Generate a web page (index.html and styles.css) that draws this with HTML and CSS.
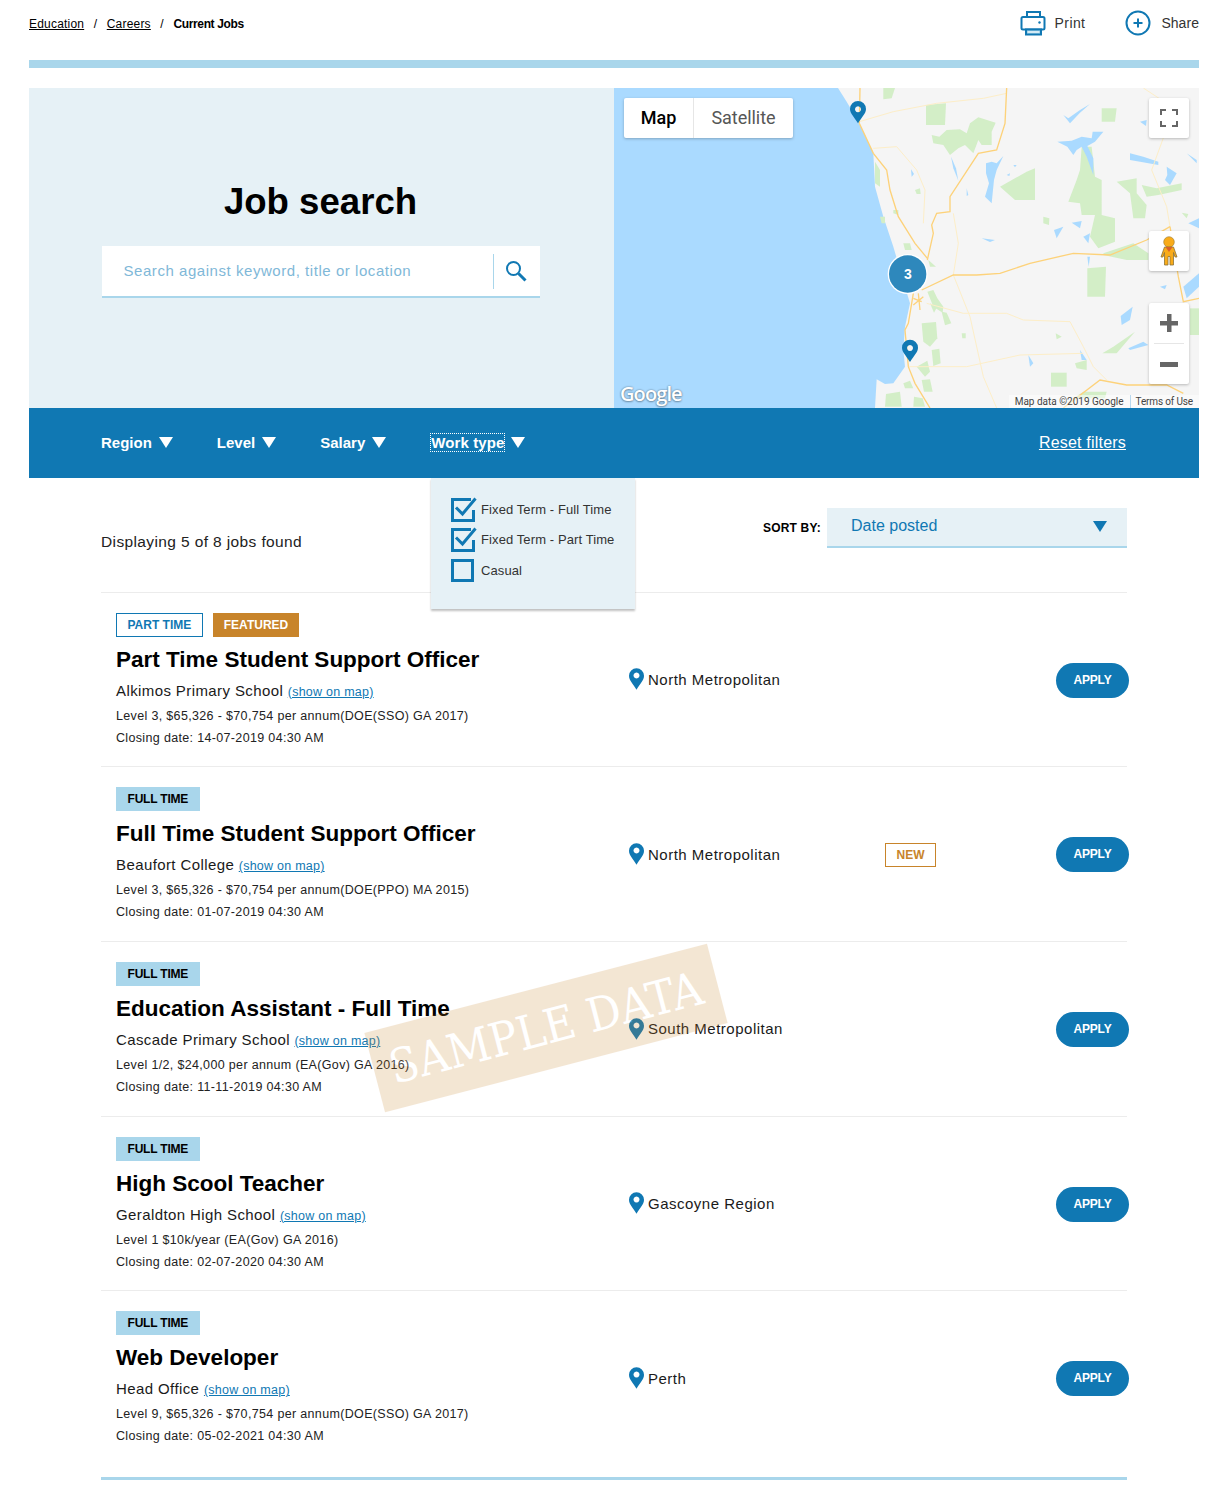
FILE: index.html
```html
<!DOCTYPE html>
<html lang="en">
<head>
<meta charset="utf-8">
<title>Current Jobs</title>
<link rel="stylesheet" href="styles.css">
</head>
<body>
<div class="page">
  <header class="topbar">
    <nav class="crumbs">
      <a href="#">Education</a><span class="sep">/</span><a href="#">Careers</a><span class="sep">/</span><strong>Current Jobs</strong>
    </nav>
    <div class="tools">
      <span class="tool tool-print">
        <svg class="tool-icon" width="26" height="26" viewBox="0 0 26 26" fill="none" stroke="#1078b3" stroke-width="2"><path d="M7 7V2h13v5"/><rect x="1.5" y="7" width="23" height="12.5" rx="1.5"/><rect x="6" y="19.5" width="15" height="5" fill="#a9d6eb"/><path d="M8 22h11" stroke="#fff" stroke-width="1"/><circle cx="19.5" cy="12.5" r="1.2" fill="#1078b3" stroke="none"/></svg>
        Print
      </span>
      <span class="tool tool-share">
        <svg class="tool-icon" width="26" height="26" viewBox="0 0 26 26" fill="none" stroke="#1078b3"><circle cx="13" cy="13" r="11.5" stroke-width="2"/><path d="M13 8.5v9M8.5 13h9" stroke-width="2"/></svg>
        Share
      </span>
    </div>
  </header>
  <div class="rule"></div>

  <section class="hero">
    <div class="search-panel">
      <h1>Job search</h1>
      <div class="search-box">
        <span class="placeholder">Search against keyword, title or location</span>
        <span class="search-btn">
          <svg width="22" height="22" viewBox="0 0 22 22" fill="none" stroke="#1078b3"><circle cx="8.5" cy="8.5" r="6.5" stroke-width="2"/><path d="M13.5 13.5l7 7" stroke-width="3"/></svg>
        </span>
      </div>
    </div>
    <div class="map">
      <svg class="map-canvas" width="585" height="320" viewBox="-708 -6 1755 960">
        <rect x="-708" y="-6" width="1755" height="960" fill="#aadaff"/>
        <path fill="#f5f5f5" d="M-36-6L-10 35 28 100 70 190 75 290 100 380 130 470 165 590 180 640 165 710 160 780 165 830 130 880 105 882 80 868 75 954H1047V-6Z"/>
        <g fill="#d3eec7">
          <path d="M228 45L288 40 285 105 228 105Z"/>
          <path d="M100-6L135-6 125 25 100 28Z"/>
          <path d="M245 135L268 140 290 120 330 118 350 130 360 100 385 82 437 98 425 125 425 165 395 165 385 150 370 190 345 165 325 175 300 195 280 165 250 160Z"/>
          <path d="M450 290L530 245 555 235 555 330 495 330Z"/>
          <path d="M755 55L800 55 795 95 755 95Z"/>
          <path d="M695 170L725 170 735 260 755 270 755 375 795 385 795 455 745 475 720 440 735 375 695 375 690 340 655 335 680 270 690 240Z"/>
          <path d="M800 275L860 265 860 310 890 345 885 385 850 385 840 310Z"/>
          <path d="M875 285L920 295 995 280 995 300 925 315 890 320Z"/>
          <path d="M712 535L768 530 765 620 712 620Z"/>
          <path d="M580 380L598 385 597 405 580 400Z"/>
          <path d="M760 490L850 460 895 490 895 510 830 510 760 495Z"/>
          <path d="M75 215L90 240 90 290 75 280Z"/>
          <path d="M130 360L145 360 145 375 130 370Z"/>
          <path d="M90 380L105 380 105 400 95 400Z"/>
          <path d="M160 460L180 460 185 480 165 480Z"/>
          <path d="M235 510L258 530 240 530Z"/>
          <path d="M195 300L210 295 212 312 200 312Z"/>
          <path d="M232 605L250 600 262 625 280 650 278 668 250 650Z"/>
          <path d="M240 640L262 650 252 668Z"/>
          <path d="M275 665L290 668 304 700 285 706Z"/>
          <path d="M215 700L258 696 262 745 240 770 220 755Z"/>
          <path d="M245 780L268 776 272 820 250 828Z"/>
          <path d="M200 830L232 812 240 845 225 860Z"/>
          <path d="M215 870L240 868 248 905 222 905Z"/>
          <path d="M757 790L790 770 855 725 800 790 760 790Z"/>
          <path d="M603 848L650 848 650 890 603 890Z"/>
          <path d="M617 730L635 740 620 748Z"/>
          <path d="M675 820L710 810 710 840 680 835Z"/>
          <path d="M108 912L150 905 155 950 105 950Z"/>
          <path d="M160 880L180 872 190 895 165 895Z"/>
          <path d="M192 920L218 925 225 950 190 950Z"/>
          <path d="M1020 655L1047 655 1047 735 1020 735Z"/>
          <path d="M700 905L770 905 765 925 670 925Z"/>
          <path d="M335 730L347 730 347 745 337 745Z"/>
          <path d="M995 368L1015 372 1010 385Z"/>
        </g>
        <g fill="#aadaff">
          <path d="M622 155L665 152 695 140 725 145 728 125 760 125 735 155 712 168 730 205 730 255 710 200 695 170 680 180 670 195 652 170Z"/>
          <path d="M640 75L655 85 690 60 720 42 690 68 660 100Z"/>
          <path d="M840 190L880 200 925 215 925 225 870 215 840 210Z"/>
          <path d="M950 230L980 250 960 285 945 270 952 255Z"/>
          <path d="M1010 190L1040 210 1040 220Z"/>
          <path d="M408 220L425 215 440 220 460 198 440 240 432 270 425 340 405 320 417 280 408 250Z"/>
          <path d="M303 200L318 235 325 272 310 235Z"/>
          <path d="M183 238L192 252 185 260Z"/>
          <path d="M350 295L355 315 350 318Z"/>
          <path d="M612 420L640 410 620 445Z"/>
          <path d="M665 398L695 393 690 415Z"/>
          <path d="M700 440L720 430 715 460Z"/>
          <path d="M812 678L848 650 840 690 815 705Z"/>
          <path d="M1000 590L1047 550 1047 590 1010 625Z"/>
          <path d="M930 590L950 585 945 598Z"/>
          <path d="M1015 400L1047 385 1047 415Z"/>
          <path d="M870 95L890 90 888 108Z"/>
          <path d="M712 500H720L716 530Z"/>
          <path d="M395 445L435 450 420 456Z"/>
          <path d="M835 775L880 755 895 765 840 780Z"/>
          <path d="M535 795L550 820 540 830Z"/>
          <path d="M690 780L710 810 695 810Z"/>
          <path d="M490 225L500 225 495 232ZM470 255L480 250 478 258Z"/>
        </g>
        <g fill="none" stroke="#fdeec8" stroke-width="3">
          <path d="M28 95L130 65 260 40 400 25 470 10"/>
          <path d="M70 175L140 170 200 240 225 300 220 400"/>
          <path d="M310 370L325 460 310 555 360 680 400 860 440 954"/>
          <path d="M340 670L470 670 520 690 660 695 700 770 730 830 770 870"/>
          <path d="M175 830L350 830 510 795 700 790"/>
          <path d="M880-6L950 40M945 130L905 240 950 350 960 410"/>
          <path d="M230 640L340 670"/>
        </g>
        <g fill="none" stroke="#fdd27a" stroke-width="4">
          <path d="M30-6L28 100 70 190 110 240 120 300 145 380 195 460 232 505"/>
          <path d="M470-6L465 100 440 180 385 190 300 320 300 365 260 370 245 405 250 430 232 510"/>
          <path d="M215 600L310 555 380 555 450 550 540 520 670 490 780 495 890 450 960 410"/>
          <path d="M960 410L985 560 1000 635 1047 625"/>
          <path d="M190 610L175 700 165 720 175 830 195 880 240 954"/>
          <path d="M640 954L750 870 830 885 950 885 1000 910"/>
          <path d="M190 625L215 635M190 645L220 620M205 610L210 660"/>
        </g>
        <circle class="cluster-ring" cx="173" cy="552" r="60"/>
        <circle class="cluster" cx="173" cy="552" r="56"/>
        <path class="marker" fill-rule="evenodd" d="M24 100C12 80 0 70 0 57A24 24 0 0 1 48 57C48 70 36 80 24 100ZM24 49A9 9 0 1 0 24.01 49Z"/>
        <path class="marker" fill-rule="evenodd" d="M180 816C168 796 156 786 156 773A24 24 0 0 1 204 773C204 786 192 796 180 816ZM180 765A9 9 0 1 0 180.01 765Z"/>
      </svg>
      <span class="cluster-num">3</span>
      <div class="map-type gm-ctl">
        <span class="type-on">Map</span><span class="type-off">Satellite</span>
      </div>
      <span class="gm-ctl fullscreen">
        <svg width="18" height="18" viewBox="0 0 18 18" fill="none" stroke="#666" stroke-width="2"><path d="M1 6V1H6M12 1H17V6M17 12V17H12M6 17H1V12"/></svg>
      </span>
      <span class="gm-ctl pegman">
        <svg width="18" height="30" viewBox="0 0 18 30"><circle cx="9" cy="6" r="5.3" fill="#f9ab19" stroke="#9a7a30" stroke-width=".6"/><path d="M4.5 11H13.5L17 21H15L13.5 16.5V29H10V20.5H8V29H4.5V16.5L3 21H1Z" fill="#f9ab19" stroke="#8a7238" stroke-width=".8"/><path d="M5.5 11H12.5L9 16Z" fill="#d9602a"/></svg>
      </span>
      <div class="gm-ctl zoomctl">
        <span class="zoom-btn"><svg width="18" height="18" viewBox="0 0 18 18" fill="#666"><path d="M7 0h4.5v7H18v4.5h-6.5V18H7v-6.5H0V7h7z"/></svg></span>
        <span class="zoom-div"></span>
        <span class="zoom-btn"><svg width="18" height="5" viewBox="0 0 18 5" fill="#666"><path d="M0 0h18v5H0z"/></svg></span>
      </div>
      <span class="google">Google</span>
      <div class="attrib"><span>Map data ©2019 Google</span><span class="terms">Terms of Use</span></div>
    </div>
  </section>

  <nav class="filters">
    <span class="filter">Region<i class="tri"></i></span>
    <span class="filter">Level<i class="tri"></i></span>
    <span class="filter">Salary<i class="tri"></i></span>
    <span class="filter filter-open"><span class="focus">Work type</span><i class="tri"></i></span>
    <a class="reset" href="#">Reset filters</a>
  </nav>

  <div class="dropdown">
    <div class="opt"><svg width="26" height="25" viewBox="0 0 26 25" fill="none" stroke="#1078b3" stroke-width="3"><path d="M20 2.5H1.5V23.5H22.5V13"/><path d="M5 10.5L11.5 17 24.5 1.5"/></svg><span>Fixed Term - Full Time</span></div>
    <div class="opt"><svg width="26" height="25" viewBox="0 0 26 25" fill="none" stroke="#1078b3" stroke-width="3"><path d="M20 2.5H1.5V23.5H22.5V13"/><path d="M5 10.5L11.5 17 24.5 1.5"/></svg><span>Fixed Term - Part Time</span></div>
    <div class="opt"><svg width="26" height="25" viewBox="0 0 26 25" fill="none" stroke="#1078b3" stroke-width="3"><rect x="1.5" y="2.5" width="20" height="20"/></svg><span>Casual</span></div>
  </div>

  <main class="results">
    <div class="toolbar">
      <p class="count">Displaying 5 of 8 jobs found</p>
      <div class="sort">
        <span class="sort-label">SORT BY:</span>
        <span class="sort-select">Date posted<i class="tri tri-blue"></i></span>
      </div>
    </div>

    <article class="job">
      <div class="job-info">
        <div class="tags"><span class="tag tag-part">PART TIME</span><span class="tag tag-featured">FEATURED</span></div>
        <h2>Part Time Student Support Officer</h2>
        <p class="school">Alkimos Primary School <a href="#">(show on map)</a></p>
        <p class="meta">Level 3, $65,326 - $70,754 per annum(DOE(SSO) GA 2017)</p>
        <p class="meta">Closing date: 14-07-2019 04:30 AM</p>
      </div>
      <div class="loc"><svg class="pin" width="15" height="22" viewBox="0 0 16 23"><path fill="#1078b3" fill-rule="evenodd" d="M8 23C4 16 0 13 0 8A8 8 0 0 1 16 8C16 13 12 16 8 23ZM8 4.5A3.2 3.2 0 1 0 8.01 4.5Z"/></svg>North Metropolitan</div>
      <div class="flag"></div>
      <a class="apply" href="#">APPLY</a>
    </article>

    <article class="job">
      <div class="job-info">
        <div class="tags"><span class="tag tag-full">FULL TIME</span></div>
        <h2>Full Time Student Support Officer</h2>
        <p class="school">Beaufort College <a href="#">(show on map)</a></p>
        <p class="meta">Level 3, $65,326 - $70,754 per annum(DOE(PPO) MA 2015)</p>
        <p class="meta">Closing date: 01-07-2019 04:30 AM</p>
      </div>
      <div class="loc"><svg class="pin" width="15" height="22" viewBox="0 0 16 23"><path fill="#1078b3" fill-rule="evenodd" d="M8 23C4 16 0 13 0 8A8 8 0 0 1 16 8C16 13 12 16 8 23ZM8 4.5A3.2 3.2 0 1 0 8.01 4.5Z"/></svg>North Metropolitan</div>
      <div class="flag"><span class="new">NEW</span></div>
      <a class="apply" href="#">APPLY</a>
    </article>

    <article class="job">
      <div class="job-info">
        <div class="tags"><span class="tag tag-full">FULL TIME</span></div>
        <h2>Education Assistant - Full Time</h2>
        <p class="school">Cascade Primary School <a href="#">(show on map)</a></p>
        <p class="meta">Level 1/2, $24,000 per annum (EA(Gov) GA 2016)</p>
        <p class="meta">Closing date: 11-11-2019 04:30 AM</p>
      </div>
      <div class="loc"><svg class="pin" width="15" height="22" viewBox="0 0 16 23"><path fill="#1078b3" fill-rule="evenodd" d="M8 23C4 16 0 13 0 8A8 8 0 0 1 16 8C16 13 12 16 8 23ZM8 4.5A3.2 3.2 0 1 0 8.01 4.5Z"/></svg>South Metropolitan</div>
      <div class="flag"></div>
      <a class="apply" href="#">APPLY</a>
    </article>

    <article class="job">
      <div class="job-info">
        <div class="tags"><span class="tag tag-full">FULL TIME</span></div>
        <h2>High Scool Teacher</h2>
        <p class="school">Geraldton High School <a href="#">(show on map)</a></p>
        <p class="meta">Level 1 $10k/year (EA(Gov) GA 2016)</p>
        <p class="meta">Closing date: 02-07-2020 04:30 AM</p>
      </div>
      <div class="loc"><svg class="pin" width="15" height="22" viewBox="0 0 16 23"><path fill="#1078b3" fill-rule="evenodd" d="M8 23C4 16 0 13 0 8A8 8 0 0 1 16 8C16 13 12 16 8 23ZM8 4.5A3.2 3.2 0 1 0 8.01 4.5Z"/></svg>Gascoyne Region</div>
      <div class="flag"></div>
      <a class="apply" href="#">APPLY</a>
    </article>

    <article class="job">
      <div class="job-info">
        <div class="tags"><span class="tag tag-full">FULL TIME</span></div>
        <h2>Web Developer</h2>
        <p class="school">Head Office <a href="#">(show on map)</a></p>
        <p class="meta">Level 9, $65,326 - $70,754 per annum(DOE(SSO) GA 2017)</p>
        <p class="meta">Closing date: 05-02-2021 04:30 AM</p>
      </div>
      <div class="loc"><svg class="pin" width="15" height="22" viewBox="0 0 16 23"><path fill="#1078b3" fill-rule="evenodd" d="M8 23C4 16 0 13 0 8A8 8 0 0 1 16 8C16 13 12 16 8 23ZM8 4.5A3.2 3.2 0 1 0 8.01 4.5Z"/></svg>Perth</div>
      <div class="flag"></div>
      <a class="apply" href="#">APPLY</a>
    </article>
    <div class="end-rule"></div>
  </main>

  <div class="watermark">SAMPLE DATA</div>
</div>
</body>
</html>
```
FILE: styles.css
```css
* { box-sizing: border-box; }
html, body { margin: 0; padding: 0; }
body {
  font-family: "Liberation Sans", Arial, sans-serif;
  color: #1a1a1a;
  background: #fff;
}
a { color: inherit; }
p, h1, h2 { margin: 0; }
i { font-style: normal; }

.page {
  position: relative;
  height: 1489px;
  padding: 0 23px 0 29px;
  overflow: hidden;
}

/* top bar */
.topbar {
  height: 60px;
  display: flex;
  justify-content: space-between;
  align-items: center;
  padding-bottom: 14px;
}
.crumbs { font-size: 12px; letter-spacing: .2px; color: #000; margin-top: 1px; }
.crumbs .sep { margin: 0 9.5px; }
.crumbs strong { letter-spacing: -.35px; }
.tools { display: flex; gap: 40px; }
.tool {
  display: flex;
  align-items: center;
  gap: 9px;
  font-size: 14px;
  letter-spacing: .4px;
  color: #333;
}
.tool-share { gap: 10px; letter-spacing: .05px; }
.tool-icon { margin-top: -1px; }
.rule { height: 8px; background: #a9d6eb; }

/* hero */
.hero { display: flex; height: 320px; margin-top: 20px; }
.search-panel {
  flex: 0 0 585px;
  background: #e6f1f6;
  display: flex;
  flex-direction: column;
  align-items: center;
  padding-top: 91px;
  padding-right: 2px;
}
h1 {
  font-size: 36.6px;
  line-height: 46px;
  font-weight: 700;
  color: #000;
  margin-bottom: 21px;
}
.search-box {
  width: 438px;
  height: 52px;
  background: #fff;
  border-bottom: 2px solid #a9d6eb;
  display: flex;
  align-items: center;
  padding-left: 22px;
  justify-content: space-between;
}
.placeholder { font-size: 15px; letter-spacing: .55px; color: #7fb8d8; margin-top: -2px; }
.search-btn {
  width: 47px;
  height: 35px;
  border-left: 1px solid #a9d6eb;
  display: flex;
  align-items: center;
  justify-content: center;
  padding-right: 1px;
}

/* map */
.map { position: relative; flex: 1; overflow: hidden; }
.map-canvas { display: block; }
.marker { fill: #1078b3; }
.cluster-ring { fill: #fff; }
.cluster { fill: #2e88bc; }
.cluster-num {
  position: absolute;
  left: 274px;
  top: 177px;
  width: 40px;
  text-align: center;
  font: 700 14px/18px "Liberation Sans", sans-serif;
  color: #fff;
}
.gm-ctl {
  position: absolute;
  background: #fff;
  box-shadow: 0 1px 3px rgba(0,0,0,.25);
  border-radius: 2px;
  font-family: Roboto, sans-serif;
}
.map-type { left: 10px; top: 10px; width: 169px; height: 40px; display: flex; font-size: 18px; line-height: 40px; text-align: center; }
.type-on { width: 70px; color: #000; font-weight: 500; border-right: 1px solid #e6e6e6; }
.type-off { flex: 1; color: #565656; letter-spacing: -.05px; }
.fullscreen, .pegman { width: 40px; height: 40px; display: flex; align-items: center; justify-content: center; right: 10px; }
.fullscreen { top: 10px; }
.pegman { top: 143px; }
.zoomctl { right: 10px; top: 215px; width: 40px; height: 81px; display: flex; flex-direction: column; align-items: center; }
.zoom-btn { height: 40px; width: 40px; display: flex; align-items: center; justify-content: center; }
.zoom-div { width: 30px; height: 1px; background: #e6e6e6; }
.google {
  position: absolute;
  left: 6px;
  top: 293px;
  font: 600 20px/26px "Open Sans", sans-serif;
  letter-spacing: -.9px;
  color: #fff;
  text-shadow: 0 0 2px rgba(0,0,0,.45), 0 1px 2px rgba(0,0,0,.25);
}
.attrib {
  position: absolute;
  right: 0;
  bottom: 0;
  height: 13px;
  padding: 0 6px;
  display: flex;
  gap: 12px;
  font: 10px/14px Roboto, sans-serif;
  color: #444;
  background: rgba(255,255,255,.5);
}
.terms { border-left: 1px solid #b8d8ee; padding-left: 5px; margin-left: -6px; letter-spacing: -.15px; }

/* filter bar */
.filters {
  height: 70px;
  background: #1078b3;
  color: #fff;
  display: flex;
  align-items: center;
  padding: 0 73px 2px 72px;
  gap: 44px;
  font-size: 15px;
  font-weight: 700;
}
.filter { display: flex; align-items: center; gap: 7px; }
.filter-open { margin-left: 1px; letter-spacing: .1px; }
.focus { outline: 1px dotted #fff; }
.tri {
  display: block;
  width: 0;
  height: 0;
  border-left: 7px solid transparent;
  border-right: 7px solid transparent;
  border-top: 11px solid #fff;
}
.tri-blue { border-top-color: #1078b3; }
.reset { margin-left: auto; font-weight: 400; font-size: 16px; letter-spacing: .2px; margin-top: 2px; }

/* dropdown */
.dropdown {
  position: absolute;
  left: 431px;
  top: 478px;
  width: 204px;
  height: 131px;
  padding: 16px 0 0 20px;
  background: #e6f1f6;
  box-shadow: 0 2px 2px rgba(0,0,0,.25);
  z-index: 3;
}
.opt {
  display: flex;
  align-items: center;
  height: 30.5px;
  font-size: 13px;
  letter-spacing: .1px;
  color: #333;
}
.opt svg { flex: none; width: 26px; margin-right: 4px; }

/* results */
.results { margin: 0 72px; }
.toolbar {
  height: 113.5px;
  display: flex;
  justify-content: space-between;
  align-items: flex-start;
  padding-top: 30px;
}
.count { font-size: 15.5px; letter-spacing: .38px; line-height: 20px; margin-top: 24px; color: #222; }
.sort { display: flex; align-items: center; }
.sort-label { font-size: 12px; font-weight: 700; letter-spacing: .2px; color: #000; margin-right: 6px; }
.sort-select {
  width: 300px;
  height: 40px;
  background: #e6f1f6;
  border-bottom: 2px solid #a9d6eb;
  color: #1078b3;
  font-size: 16px;
  display: flex;
  align-items: center;
  justify-content: space-between;
  padding: 0 20px 2px 24px;
}
.job {
  height: 174.7px;
  border-top: 1px solid #ececec;
  display: grid;
  grid-template-columns: 513px 256px 1fr auto;
  align-items: center;
  padding-left: 15px;
}
.job-info { align-self: start; padding-top: 20px; }
.tags { display: flex; gap: 10px; margin-bottom: 9px; }
.tag {
  height: 24px;
  padding: 0 11px;
  font-size: 12px;
  font-weight: 700;
  line-height: 24px;
}
.tag-part { border: 1px solid #1078b3; color: #1078b3; padding: 0 10.5px; line-height: 22px; }
.tag-featured { background: #c8842a; color: #fff; padding: 0 11px; }
.tag-full { background: #a9d6eb; color: #000; letter-spacing: -.2px; padding: 0 11.5px; }
h2 { font-size: 22.5px; line-height: 28px; font-weight: 700; color: #000; margin-bottom: 5px; }
.school { font-size: 15px; line-height: 24px; letter-spacing: .4px; margin-bottom: 1px; }
.school a { font-size: 12.5px; letter-spacing: .25px; color: #1078b3; }
.meta { font-size: 12.5px; line-height: 22px; letter-spacing: .34px; color: #222; }
.loc { display: flex; align-items: center; gap: 4px; font-size: 15px; letter-spacing: .5px; }
.pin { flex: none; }
.new {
  display: inline-block;
  width: 51px;
  height: 24px;
  margin-top: 2px;
  border: 1px solid #c8842a;
  color: #c8842a;
  font-size: 12px;
  font-weight: 700;
  line-height: 22px;
  text-align: center;
}
.apply {
  width: 73px;
  height: 35px;
  margin-top: 1.6px;
  margin-right: -2px;
  border-radius: 18px;
  background: #1078b3;
  color: #fff;
  font-size: 12px;
  font-weight: 700;
  letter-spacing: -.2px;
  line-height: 35px;
  text-align: center;
  text-decoration: none;
}
.end-rule { height: 3px; margin-top: 12px; background: #a9d6eb; }

.watermark {
  position: absolute;
  left: 369px;
  top: 987px;
  width: 354px;
  height: 82px;
  transform: rotate(-14.6deg);
  background: #c8842a;
  opacity: .2;
  color: #fff;
  font: 400 47px/82px "DejaVu Serif Condensed", "DejaVu Serif", serif;
  font-stretch: condensed;
  text-align: center;
  white-space: nowrap;
  pointer-events: none;
  z-index: 4;
}
```
